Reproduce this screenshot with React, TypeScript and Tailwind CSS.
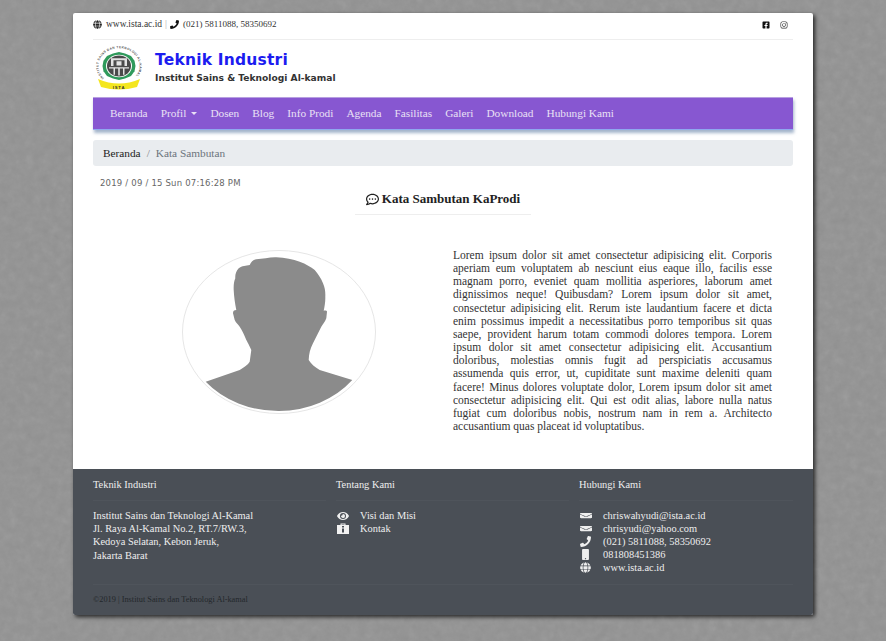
import { FaGlobe, FaPhone, FaFacebookSquare, FaInstagram, FaEnvelope, FaMobile, FaEye, FaRegCommentDots } from "react-icons/fa";

const navItems = ["Beranda", "Profil", "Dosen", "Blog", "Info Prodi", "Agenda", "Fasilitas", "Galeri", "Download", "Hubungi Kami"];

const lorem =
  "Lorem ipsum dolor sit amet consectetur adipisicing elit. Corporis aperiam eum voluptatem ab nesciunt eius eaque illo, facilis esse magnam porro, eveniet quam mollitia asperiores, laborum amet dignissimos neque! Quibusdam? Lorem ipsum dolor sit amet, consectetur adipisicing elit. Rerum iste laudantium facere et dicta enim possimus impedit a necessitatibus porro temporibus sit quas saepe, provident harum totam commodi dolores tempora. Lorem ipsum dolor sit amet consectetur adipisicing elit. Accusantium doloribus, molestias omnis fugit ad perspiciatis accusamus assumenda quis error, ut, cupiditate sunt maxime deleniti quam facere! Minus dolores voluptate dolor, Lorem ipsum dolor sit amet consectetur adipisicing elit. Qui est odit alias, labore nulla natus fugiat cum doloribus nobis, nostrum nam in rem a. Architecto accusantium quas placeat id voluptatibus.";

function Logo() {
  return (
    <svg width="50" height="46" viewBox="0 0 50 46">
      <defs>
        <path id="ring" d="M10.900 33 A20.500 17.800 0 1 1 41.100 33" fill="none" />
      </defs>
      <text fontSize="3.200" fontWeight="700" fontFamily="Liberation Sans, sans-serif" fill="#555">
        <textPath href="#ring" textLength="84">INSTITUT SAINS DAN TEKNOLOGI AL-KAMAL</textPath>
      </text>
      <g transform="translate(0 2.730) scale(1 0.87)">
        <polygon points="26,5 32,6.500 38,9.500 41.500,15 42.500,21 41.500,27 38,32.500 32,35.500 26,37 20,35.500 14,32.500 10.500,27 9.500,21 10.500,15 14,9.500 20,6.500" fill="#2f9a5b" />
        <circle cx="26" cy="21" r="13" fill="#fff" />
        <circle cx="26" cy="21" r="12" fill="#4a4a4a" />
        <path d="M18 12h16v9h-2.500v-6.500h-11v6.500h-2.500zM23.500 15.500h5v5h-5zM16 22.500h20v1.500h-20zM20.500 24h1.500v7h-1.500zM25.200 24h1.600v8h-1.600zM30 24h1.500v7h-1.500z" fill="#e2e2e2" />
      </g>
      <path d="M5 34 Q26 43 47 34 L44 42 Q26 47 8 42 Z" fill="#f4e61e" />
      <text x="26" y="44" fontSize="4.200" fontWeight="700" textAnchor="middle" fontFamily="Liberation Sans, sans-serif" fill="#333" letterSpacing="0.8">ISTA</text>
    </svg>
  );
}

function Silhouette() {
  return (
    <svg width="194" height="164" viewBox="0 0 194 164" className="block">
      <ellipse cx="97" cy="82" rx="96.500" ry="81.500" fill="#fff" stroke="#e6e6e6" />
      <path
        d="M23.700 131.700 L57.700 120 C62 117 66 115 67.700 111.700 L69.300 100 C67 95 66 93 64.300 90 C62 84 60 80 57.700 76.700 C56 74 54 73 52.700 70 L51 63.300 C51 61 52 60 54.300 60 C53 53 52 47 51.700 40 C51.500 35 52 31 53.300 28.300 C53 25 54 21 56.700 18.300 C60 15.500 64 16 67.700 15 C69 12 71 10 74.300 9.300 C81 9 88 7 94.300 7.300 C103 8 111 9 117.700 11.700 C124 14 129 17 132.700 20 C136 24 139 28 141 33.300 C143 38 143.500 42 143.300 46.700 C143.500 52 142.500 57 141.700 60.700 C143 60.500 145 60.500 145 61.700 L144.300 68.300 C143 72 141 74 139.300 76.700 L131 93.300 C128 99 127 104 126.700 110 C129 114 133 117 137.700 120 L170.300 130 A94 80 0 0 1 97 161 A94 80 0 0 1 23.700 131.700 Z"
        fill="#8b8b8b"
      />
    </svg>
  );
}

function InfoCase() {
  return (
    <svg width="12" height="11" viewBox="0 0 12 11" fill="#f2f2f2">
      <path d="M0 2h3.500V0.500h5V2H12v9H0zM4.500 1.500V2h3v-.5z" />
      <rect x="5" y="3" width="2" height="1.500" fill="#4a4f56" />
      <rect x="5" y="5.500" width="2" height="4" fill="#4a4f56" />
    </svg>
  );
}

function MailIcon() {
  return <FaEnvelope className="h-[7px] w-[12px]" preserveAspectRatio="none" />;
}

function FooterRow({ icon, text }: { icon: React.ReactNode; text: string }) {
  return (
    <div className="flex h-[13px] items-center">
      <span className="flex w-[24px] pl-px">{icon}</span>
      <span>{text}</span>
    </div>
  );
}

export default function App() {
  return (
    <main className="relative min-h-screen overflow-hidden bg-[#929292] pt-[13px] font-['Liberation_Serif',serif]">
      {/* concrete wall look behind the page */}
      <svg className="absolute inset-0 h-full w-full opacity-15" aria-hidden="true">
        <filter id="wall">
          <feTurbulence type="fractalNoise" baseFrequency="0.12" numOctaves="4" seed="4" />
          <feColorMatrix type="saturate" values="0" />
        </filter>
        <rect width="100%" height="100%" filter="url(#wall)" />
      </svg>

      <div className="relative mx-auto flex h-[602px] w-[740px] flex-col rounded-[2px] bg-white shadow-[2px_2px_4px_rgba(0,0,0,0.75)]">
        <div className="flex-1 px-5">
          <div className="flex h-[27px] items-center justify-between border-b border-[#eeeeee] pb-[3px] text-[9.500px] text-[#333]">
            <div className="flex items-center">
              <FaGlobe className="mr-1 size-[9px] text-[#222]" />
              <span>www.ista.ac.id</span>
              <span className="mx-[3px] text-[#aaa]">|</span>
              <FaPhone className="mr-[4px] size-[9px] text-[#111]" />
              <span className="text-[9px]">(021) 5811088, 58350692</span>
            </div>
            <div className="mr-[5px] flex items-center gap-[10px]">
              <FaFacebookSquare className="size-[8px] text-[#111]" />
              <FaInstagram className="size-[8px] text-[#333]" />
            </div>
          </div>

          <div className="flex h-[57px] items-center pb-px">
            <Logo />
            <div className="ml-[12px]">
              <h1 className="text-[15.500px] leading-[19px] font-bold tracking-[0.2px] text-[#1c1cf0] font-['DejaVu_Sans',sans-serif]">Teknik Industri</h1>
              <p className="mt-[2px] text-[9.150px] leading-[13px] font-bold text-[#333] font-['DejaVu_Sans',sans-serif]">Institut Sains &amp; Teknologi Al-kamal</p>
            </div>
          </div>

          <nav className="flex h-[33px] items-center gap-[13px] border-t border-b border-t-[#b79fe0] border-b-[#8fa8f0] bg-[#8757d1] pl-[17px] text-[11.300px] text-[#e9e0f5] shadow-[1px_3px_3px_rgba(90,120,160,0.55)]">
            {navItems.map((item) => (
              <span key={item} className="flex items-center">
                {item}
                {item === "Profil" && <span className="ml-[5px] border-x-[3px] border-t-[3px] border-x-transparent border-t-[#e9e0f5]" />}
              </span>
            ))}
          </nav>

          <div className="mt-[10px] flex h-[26px] items-center rounded-[3px] bg-[#e9ecef] px-[10px] text-[11.300px]">
            <span className="font-medium text-[#222]">Beranda</span>
            <span className="mx-[6px] text-[#888]">/</span>
            <span className="text-[#6c757d]">Kata Sambutan</span>
          </div>

          <p className="mt-[12px] ml-[7px] text-[8.500px] leading-[10px] tracking-[0.2px] text-[#666] font-['DejaVu_Sans',sans-serif]">2019 / 09 / 15 Sun 07:16:28 PM</p>

          <div className="mx-auto mt-[4px] w-[176px] border-b border-[#eeeeee] pb-[8px] text-center">
            <h2 className="flex h-[14px] items-center justify-center text-[13px] font-bold text-[#222]">
              <FaRegCommentDots className="mr-[3px] size-[13px]" />
              Kata Sambutan KaProdi
            </h2>
          </div>

          <div className="mt-[35px] flex">
            <div className="ml-[89px] w-[194px] shrink-0">
              <Silhouette />
            </div>
            <p className="mt-[-1px] ml-[77px] w-[319px] text-justify text-[11.500px] leading-[13.150px] text-[#333]">{lorem}</p>
          </div>
        </div>

        <footer className="flex h-[146px] flex-col rounded-b-[2px] bg-[#4a4f56] px-5 text-[10.400px] text-[#eeeeee]">
          <div className="flex pt-[10px]">
            <div className="w-[243px]">
              <h3 className="mr-[10px] border-b border-[#4f545b] pb-[10px] leading-[11px]">Teknik Industri</h3>
              <div className="mt-[8px] leading-[13.200px]">
                <p>Institut Sains dan Teknologi Al-Kamal</p>
                <p>Jl. Raya Al-Kamal No.2, RT.7/RW.3,</p>
                <p>Kedoya Selatan, Kebon Jeruk,</p>
                <p>Jakarta Barat</p>
              </div>
            </div>
            <div className="w-[243px]">
              <h3 className="mr-[10px] border-b border-[#4f545b] pb-[10px] leading-[11px]">Tentang Kami</h3>
              <div className="mt-[8px]">
                <FooterRow icon={<FaEye className="size-[12px]" />} text="Visi dan Misi" />
                <FooterRow icon={<InfoCase />} text="Kontak" />
              </div>
            </div>
            <div className="flex-1">
              <h3 className="border-b border-[#4f545b] pb-[10px] leading-[11px]">Hubungi Kami</h3>
              <div className="mt-[8px]">
                <FooterRow icon={<MailIcon />} text="chriswahyudi@ista.ac.id" />
                <FooterRow icon={<MailIcon />} text="chrisyudi@yahoo.com" />
                <FooterRow icon={<FaPhone className="size-[11px]" />} text="(021) 5811088, 58350692" />
                <FooterRow icon={<FaMobile className="size-[11px]" />} text="081808451386" />
                <FooterRow icon={<FaGlobe className="size-[11px]" />} text="www.ista.ac.id" />
              </div>
            </div>
          </div>
          <div className="mt-[10px] border-t border-[#4f545b] pt-[9px] text-[8.300px] leading-[11px] text-[#23272b]">©2019 | Institut Sains dan Teknologi Al-kamal</div>
        </footer>
      </div>
    </main>
  );
}
